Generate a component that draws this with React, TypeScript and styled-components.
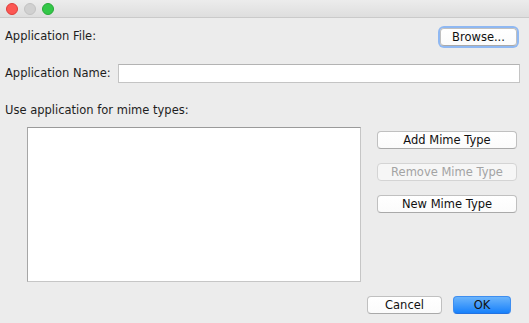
import React from 'react';
import styled, { createGlobalStyle } from 'styled-components';

const GlobalStyle = createGlobalStyle`
  html, body {
    margin: 0;
    padding: 0;
    background: #ececec;
  }
  * {
    box-sizing: border-box;
  }
`;

const Window = styled.div`
  width: 529px;
  height: 323px;
  background: #ececec;
  font-family: 'DejaVu Sans', 'Liberation Sans', sans-serif;
  font-size: 11.5px;
  color: #1e1e1e;
  display: flex;
  flex-direction: column;
  overflow: hidden;
`;

const TitleBar = styled.div`
  height: 18px;
  flex: none;
  background: linear-gradient(#ececec, #dedede);
  border-bottom: 1px solid #cacaca;
  display: flex;
  align-items: center;
  gap: 6px;
  padding-left: 6px;
`;

const Light = styled.span<{ $color: string; $edge: string }>`
  width: 12px;
  height: 12px;
  border-radius: 50%;
  background: ${(p) => p.$color};
  border: 0.5px solid ${(p) => p.$edge};
`;

const Body = styled.div`
  flex: 1;
  display: flex;
  flex-direction: column;
  padding: 10px 0 0 5px;
`;

const FileRow = styled.div`
  display: flex;
  align-items: center;
  justify-content: space-between;
  height: 17px;
  padding-right: 12px;
`;

const NameRow = styled.div`
  display: flex;
  align-items: center;
  gap: 7px;
  margin-top: 19px;
  padding-right: 9px;
`;

const Label = styled.span`
  white-space: nowrap;
  line-height: 15px;
`;

const Field = styled.input`
  flex: 1;
  height: 19px;
  border: 1px solid #c4c4c4;
  border-top-color: #b3b3b3;
  background: #fff;
  outline: none;
`;

const Section = styled.div`
  margin-top: 20px;
`;

const MimeArea = styled.div`
  display: flex;
  gap: 16px;
  margin: 9px 0 0 22px;
`;

const MimeList = styled.div`
  width: 334px;
  height: 155px;
  background: #fff;
  border: 1px solid #c6c6c6;
  border-top-color: #9a9a9a;
  border-left-color: #a6a6a6;
`;

const SideButtons = styled.div`
  display: flex;
  flex-direction: column;
  gap: 14px;
  padding-top: 4px;
`;

const Button = styled.button<{ $w: number; $focus?: boolean }>`
  width: ${(p) => p.$w}px;
  height: 18px;
  padding: 0;
  font-family: inherit;
  font-size: 11.5px;
  color: #111;
  background: linear-gradient(#ffffff, #fbfbfb);
  border: 1px solid #c0c0c0;
  border-bottom-color: #a9a9a9;
  border-radius: 4px;
  box-shadow: ${(p) => (p.$focus ? '0 0 0 2px #8fb8f2' : 'none')};
  &:disabled {
    color: #a3a3a3;
    background: #f6f6f6;
    border-color: #d4d4d4;
  }
`;

const PrimaryButton = styled(Button)`
  background: linear-gradient(#6bb4fb, #1881fb);
  border: 1px solid #3e8ef0;
  border-bottom-color: #2472e0;
  color: #111;
`;

const Footer = styled.div`
  display: flex;
  justify-content: flex-end;
  gap: 11px;
  margin-top: 14px;
  padding-right: 18px;
`;

function App() {
  return (
    <Window>
      <GlobalStyle />
      <TitleBar>
        <Light $color="#fc5753" $edge="#de3d3a" />
        <Light $color="#d0d0d0" $edge="#c2c2c2" />
        <Light $color="#33c748" $edge="#27a838" />
      </TitleBar>
      <Body>
        <FileRow>
          <Label>Application File:</Label>
          <Button $w={77} $focus>Browse...</Button>
        </FileRow>
        <NameRow>
          <Label>Application Name:</Label>
          <Field />
        </NameRow>
        <Section>
          <Label>Use application for mime types:</Label>
        </Section>
        <MimeArea>
          <MimeList />
          <SideButtons>
            <Button $w={140}>Add Mime Type</Button>
            <Button $w={140} disabled>Remove Mime Type</Button>
            <Button $w={140}>New Mime Type</Button>
          </SideButtons>
        </MimeArea>
        <Footer>
          <Button $w={75}>Cancel</Button>
          <PrimaryButton $w={58}>OK</PrimaryButton>
        </Footer>
      </Body>
    </Window>
  );
}

export default App;
